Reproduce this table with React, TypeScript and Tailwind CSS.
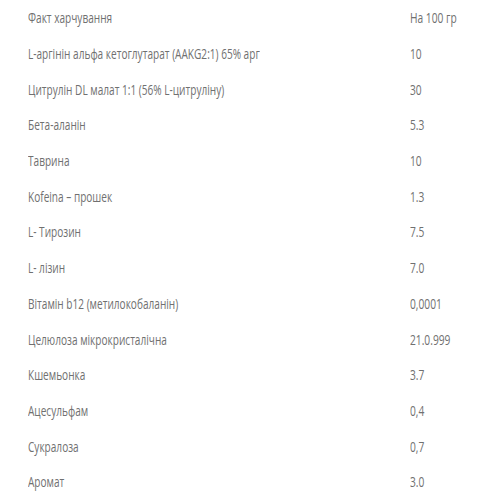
const rows: [string, string][] = [
  ["Факт харчування", "На 100 гр"],
  ["L-аргінін альфа кетоглутарат (AAKG2:1) 65% арг", "10"],
  ["Цитрулін DL малат 1:1 (56% L-цитруліну)", "30"],
  ["Бета-аланін", "5.3"],
  ["Таврина", "10"],
  ["Kofeina – прошек", "1.3"],
  ["L- Тирозин", "7.5"],
  ["L- лізин", "7.0"],
  ["Вітамін b12 (метилокобаланін)", "0,0001"],
  ["Целюлоза мікрокристалічна", "21.0.999"],
  ["Кшемьонка", "3.7"],
  ["Ацесульфам", "0,4"],
  ["Сукралоза", "0,7"],
  ["Аромат", "3.0"],
];

export default function App() {
  return (
    <div className="w-[500px] h-[500px] bg-white overflow-hidden font-['Open_Sans',sans-serif] text-[14px] text-[#707070]">
      <div className="flex flex-col">
        {rows.map(([name, value]) => (
          <div key={name} className="flex items-center h-[35.7px]">
            <div className="pl-[28px] w-[410px] whitespace-nowrap">
              <span className="inline-block origin-left scale-x-[0.72]">{name}</span>
            </div>
            <div className="whitespace-nowrap">
              <span className="inline-block origin-left scale-x-[0.73]">{value}</span>
            </div>
          </div>
        ))}
      </div>
    </div>
  );
}
